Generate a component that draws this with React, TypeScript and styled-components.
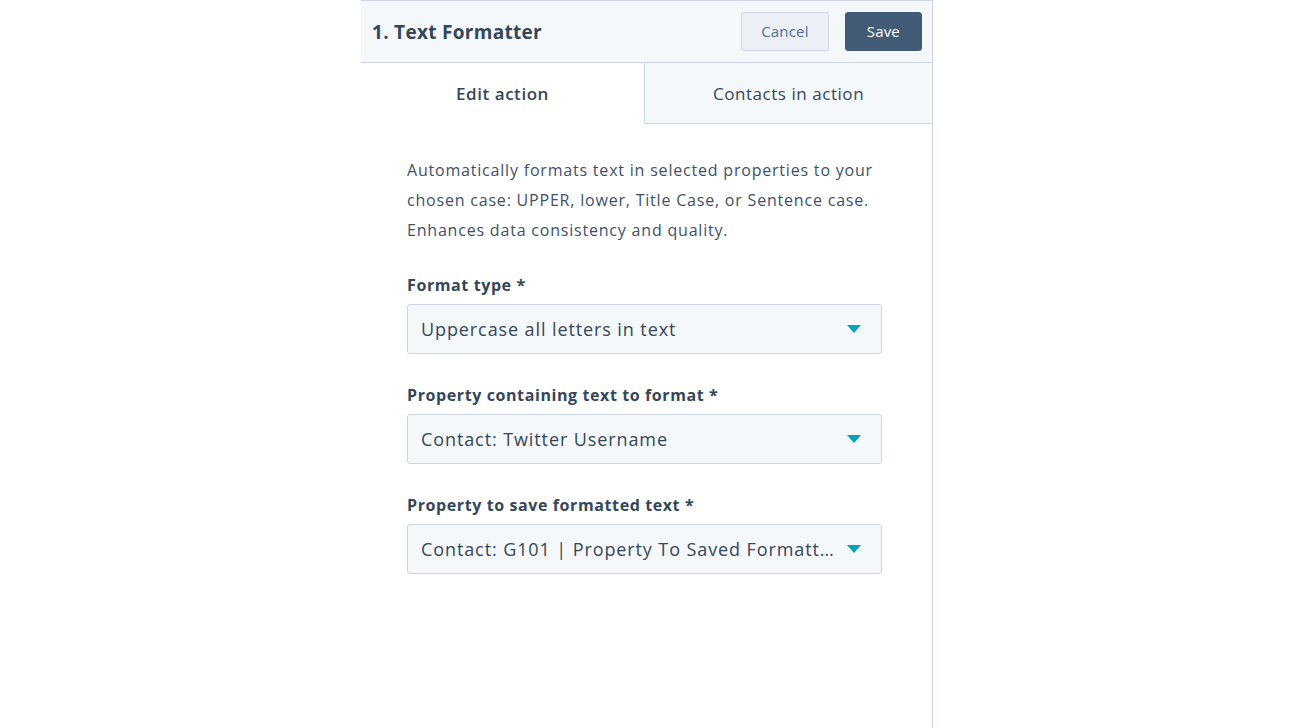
import React from 'react';
import styled, { createGlobalStyle } from 'styled-components';

const GlobalStyle = createGlobalStyle`
  html, body {
    margin: 0;
    padding: 0;
    background: #ffffff;
  }
  body {
    font-family: 'Open Sans', 'Noto Sans', sans-serif;
    color: #33475b;
  }
`;

type FieldType = {
  label: string;
  value: string;
};

const FIELDS: FieldType[] = [
  { label: 'Format type *', value: 'Uppercase all letters in text' },
  { label: 'Property containing text to format *', value: 'Contact: Twitter Username' },
  { label: 'Property to save formatted text *', value: 'Contact: G101 | Property To Saved Formatted Text' },
];

export default function App() {
  return (
    <>
      <GlobalStyle />
      <Page>
        <Panel>
          <Header>
            <Title>1. Text Formatter</Title>
            <Actions>
              <Button variant="secondary">Cancel</Button>
              <Button variant="primary">Save</Button>
            </Actions>
          </Header>
          <Tabs>
            <Tab active>Edit action</Tab>
            <Tab>Contacts in action</Tab>
          </Tabs>
          <Body>
            <Description>
              Automatically formats text in selected properties to your chosen case: UPPER, lower, Title Case, or
              Sentence case. Enhances data consistency and quality.
            </Description>
            {FIELDS.map((field) => (
              <Field key={field.label}>
                <Label>{field.label}</Label>
                <Select>
                  <SelectValue>{field.value}</SelectValue>
                  <Caret viewBox="0 0 14 8" aria-hidden="true">
                    <path d="M0 0 H14 L7 8 Z" />
                  </Caret>
                </Select>
              </Field>
            ))}
          </Body>
        </Panel>
      </Page>
    </>
  );
}

const Page = styled.div`
  display: flex;
  justify-content: center;
  min-height: 100vh;
`;

const Panel = styled.div`
  width: 572px;
  box-sizing: border-box;
  border-right: 1px solid #cbd6e2;
  display: flex;
  flex-direction: column;
`;

const Header = styled.div`
  height: 63px;
  box-sizing: border-box;
  background: #f5f8fa;
  border-top: 1px solid #cbd6e2;
  border-bottom: 1px solid #cbd6e2;
  display: flex;
  align-items: center;
  justify-content: space-between;
  padding: 0 10px 0 11px;
`;

const Title = styled.h1`
  margin: 0;
  font-size: 19px;
  font-weight: 700;
  letter-spacing: 0.3px;
  color: #33475b;
`;

const Actions = styled.div`
  display: flex;
  gap: 16px;
`;

const Button = styled.button<{ variant: 'primary' | 'secondary' }>`
  height: 39px;
  box-sizing: border-box;
  padding: 0 ${(p) => (p.variant === 'primary' ? 21 : 19)}px 1px;
  border-radius: 3px;
  font-family: inherit;
  font-size: 15px;
  letter-spacing: 0.2px;
  cursor: pointer;
  border: 1px solid ${(p) => (p.variant === 'primary' ? '#425b76' : '#cbd6e2')};
  background: ${(p) => (p.variant === 'primary' ? '#425b76' : '#eaf0f6')};
  color: ${(p) => (p.variant === 'primary' ? '#ffffff' : '#506e91')};
  font-weight: ${(p) => (p.variant === 'primary' ? 500 : 400)};
`;

const Tabs = styled.div`
  display: flex;
  height: 61px;
`;

const Tab = styled.div<{ active?: boolean }>`
  flex: ${(p) => (p.active ? '0 0 283px' : '1')};
  display: flex;
  align-items: center;
  justify-content: center;
  box-sizing: border-box;
  font-size: 17px;
  letter-spacing: 0.55px;
  font-weight: ${(p) => (p.active ? 600 : 400)};
  color: #33475b;
  background: ${(p) => (p.active ? '#ffffff' : '#f5f8fa')};
  border-left: ${(p) => (p.active ? 'none' : '1px solid #cbd6e2')};
  border-bottom: ${(p) => (p.active ? 'none' : '1px solid #cbd6e2')};
`;

const Body = styled.div`
  padding: 31px 50px 0 46px;
  display: flex;
  flex-direction: column;
`;

const Description = styled.p`
  margin: 0 0 28px;
  font-size: 16px;
  line-height: 30px;
  letter-spacing: 0.8px;
  color: #3d5169;
`;

const Field = styled.div`
  display: flex;
  flex-direction: column;
  margin-bottom: 29px;
`;

const Label = styled.label`
  font-size: 16px;
  font-weight: 700;
  line-height: 24px;
  letter-spacing: 0.6px;
  margin-bottom: 7px;
  color: #33475b;
`;

const Select = styled.div`
  height: 50px;
  box-sizing: border-box;
  background: #f5f8fa;
  border: 1px solid #cbd6e2;
  border-radius: 3px;
  display: flex;
  align-items: center;
  padding: 0 20px 0 13px;
  gap: 12px;
`;

const SelectValue = styled.span`
  flex: 1;
  min-width: 0;
  font-size: 18px;
  letter-spacing: 0.9px;
  color: #33475b;
  white-space: nowrap;
  overflow: hidden;
  text-overflow: ellipsis;
`;

const Caret = styled.svg`
  width: 14px;
  height: 8px;
  fill: #00a4bd;
  flex-shrink: 0;
`;
